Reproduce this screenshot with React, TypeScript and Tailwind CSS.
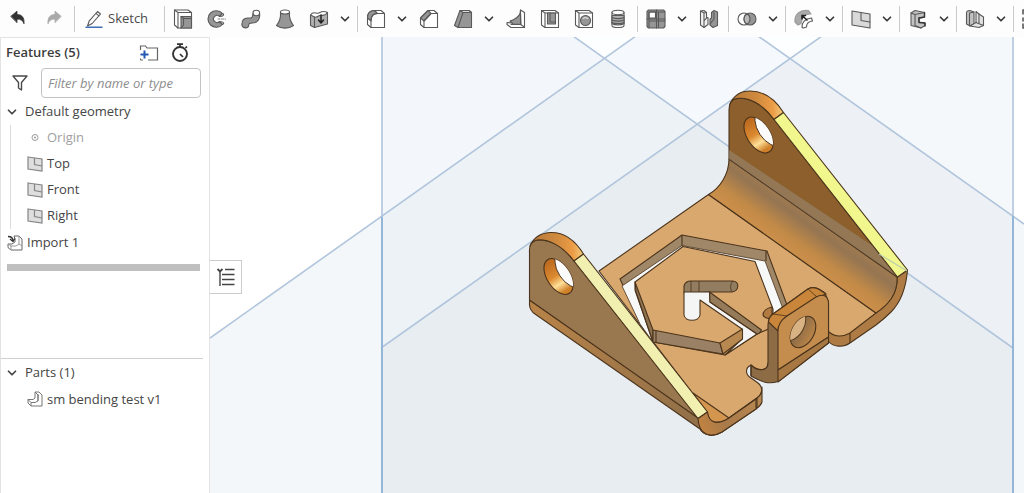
import { useState, type ReactNode } from 'react';
import { ChevronDown } from 'lucide-react';

const ink = '#595959';
const mid = '#969696';
const pale = '#d9d9d9';

function Icon({ children, size = 20 }: { children: ReactNode; size?: number }) {
  return (
    <svg width={size} height={size} viewBox="0 0 20 20" fill="none" stroke={ink} strokeWidth="1.100" strokeLinejoin="round" strokeLinecap="round" aria-hidden="true">
      {children}
    </svg>
  );
}

const icons = {
  undo: (
    <Icon>
      <path d="M3 7.2 9 2.2v3.300c4.800 0 7.600 3 7 9.300-1-3.200-3.200-4.800-7-4.700v3.200Z" fill="#333" stroke="#333" strokeWidth="0.800" />
    </Icon>
  ),
  redo: (
    <Icon>
      <path d="M17 7.2 11 2.200v3.300c-4.800 0-7.600 3-7 9.300 1-3.200 3.200-4.700 7-4.700v3.200Z" fill="#a9a9a9" stroke="#a9a9a9" strokeWidth="0.800" />
    </Icon>
  ),
  sketch: (
    <Icon>
      <path d="m3.500 17 1.800-5.200L13.500 2.500l3 2.500-8.300 9.500L3.500 17ZM12 4.300l3 2.500" />
      <path d="M2 18.300h16" stroke="#3f6fb5" strokeWidth="1.400" />
    </Icon>
  ),
  extrude: (
    <Icon>
      <path d="M1.500 1h13.500l3.500 2.500V19H5l-3.500-3Z" fill="#fff" />
      <path d="M1.500 1 5 3.500h13.500M5 3.500V19" />
      <path d="M8 7.500h10.500V19H8Z" fill={mid} />
      <path d="m8 19 2.500-3V9.500M10.500 9.500h8M8 7.500l2.500 2" />
    </Icon>
  ),
  revolve: (
    <Icon>
      <path d="M15.500 4.500A8.300 8.300 0 1 0 15.500 15.500L12.500 12.500a3.500 3.500 0 1 1 0-5Z" fill={mid} />
      <path d="M15.500 4.500c2 .5 1.500 3-3 3ZM15.500 15.500c2-.5 1.500-3-3-3Z" fill="#fff" />
      <path d="M11 10h7.500" stroke="#888" strokeDasharray="2 1.500" />
    </Icon>
  ),
  sweep: (
    <Icon>
      <path d="M1 16.500c-.5-5 2-8 6.500-7.500 4 .4 4-1 4.500-4.500l6.500-.5c1 6-2 10-7 10-3 0-4 0-4 3.500C6.500 19.500 2 19.500 1 16.500Z" fill={mid} />
      <ellipse cx="15.300" cy="4" rx="3.300" ry="2.700" fill="#fff" />
    </Icon>
  ),
  loft: (
    <Icon>
      <path d="M5.500 3c.5 6-1 10-4 13.500 5 3.500 12 3.500 17 0-3-3.500-4.500-7.500-4-13.500Z" fill={mid} />
      <ellipse cx="10" cy="3" rx="4.500" ry="2" fill="#fff" />
    </Icon>
  ),
  thicken: (
    <Icon>
      <path d="M1.500 6v10.500l4 2 13-3.500V3.500Z" fill="#b0b0b0" />
      <path d="M1.500 6c3-5 6 0 9.500-2.500 3-2 5-1 7.500 0-3 5-6.500 1.500-9 3.500-1.500 1-3 1.500-4 1Z" fill="#fff" />
      <path d="M5.500 8v10.500" />
      <path d="M12 6v8m-2.500-3 2.500 3 2.500-3" stroke="#222" strokeWidth="1.500" />
    </Icon>
  ),
  fillet: (
    <Icon>
      <path d="M1.500 9c0-5 2.500-7.500 7-7.500h6.500l3.500 3V18.500H5l-3.500-3Z" fill="#fff" />
      <path d="M1.500 9c0-5 2.500-7.500 7-7.500l3 3C7 4.500 5 7 5 12Z" fill={mid} />
      <path d="M5 18.500V12c0-5 2-7.500 6.500-7.500h7" />
    </Icon>
  ),
  chamfer: (
    <Icon>
      <path d="M1.500 9 9 1.500h6l3.500 3V18.500H5l-3.500-3Z" fill="#fff" />
      <path d="M1.500 9 9 1.500l3 3L5 12Z" fill={mid} />
      <path d="M5 18.500V12l7-7.500h6.500" />
    </Icon>
  ),
  draft: (
    <Icon>
      <path d="M7 1.500h9l2.500 2V18.500H5l-3.500-2Z" fill={mid} />
      <path d="M7 1.500h9l2.500 2H10Z" fill={pale} />
      <path d="M10 3.500 5 18.500" />
    </Icon>
  ),
  rib: (
    <Icon>
      <path d="M14.500 1 18.500 3.500V18.500H5L1 15.500v-2l6 .5 7-8Z" fill="#fff" />
      <path d="M14.500 4C12 9 9 10.500 4 12l3 3 8 .5Z" fill={mid} />
      <path d="M14.500 1v14.500L18.500 18M14.500 15.500H5" />
    </Icon>
  ),
  shell: (
    <Icon>
      <path d="M1.500 1.500H15l3.500 2.500v14.500H5L1.500 16Z" fill="#fff" />
      <path d="M1.500 1.500 5 4h13.500M5 4v14.500" />
      <path d="M7.500 4h8v11h-8Z" fill={mid} />
      <path d="M10 4v9h5.500" />
    </Icon>
  ),
  hole: (
    <Icon>
      <path d="M1.500 1.500H15L18.500 4v14.500H5L1.500 16Z" fill="#fff" />
      <path d="M1.500 1.500 5 4h13.500M5 4v14.500" />
      <circle cx="11.500" cy="11.500" r="5" fill={mid} />
      <path d="M9 9.500c1.500-1 3.500-1 5 0" stroke="#ddd" />
    </Icon>
  ),
  thread: (
    <Icon>
      <path d="M4 3.500v13c0 2.700 12 2.700 12 0v-13Z" fill="#fff" />
      <path d="M4 6.500v8c2.500 2 9.500 2 12 0v-8Z" fill="#b0b0b0" />
      <ellipse cx="10" cy="3.500" rx="6" ry="2.200" fill="#fff" />
      <path d="M4 8.500c3 1.500 9 1.500 12 0M4 11c3 1.500 9 1.500 12 0M4 13.500c3 1.500 9 1.500 12 0" />
    </Icon>
  ),
  pattern: (
    <Icon>
      <path d="M1 2.500 2.500 1h15L19 2.500v15L17.500 19h-15L1 17.500Z" fill={mid} />
      <path d="M3 3h6.500v6H3Z" fill="#fff" />
      <path d="M10.500 1v18M1 10h18M3 3h15.500M3 3v15.500M12.500 3v15.500M3 12h16" />
    </Icon>
  ),
  mirror: (
    <Icon>
      <path d="M1.500 2 5 1.500l2.500 2V9L9 8.500v7L5 18.500l-3.500-2.500Z" fill="#f1f1f1" />
      <path d="M1.500 2 5 4v14.500M5 4l2.500-.5M5 12l2.500-3" />
      <path d="m18.500 3-3.500-1.500-2.500 2V9L11 10v6l3 2.500 4.500-2Z" fill={mid} />
      <path d="M15 3.500V10l-4 5" />
    </Icon>
  ),
  boolean: (
    <Icon>
      <circle cx="7" cy="10" r="6" fill="#fff" />
      <circle cx="13" cy="10" r="6" fill={mid} />
      <path d="M10 4.800a6 6 0 0 1 0 10.400 6 6 0 0 1 0-10.400Z" fill="#b9b9b9" />
    </Icon>
  ),
  moveFace: (
    <Icon>
      <path d="M1 13C0 5 7 0 14.500 1.500L17 5C11 4.500 7.500 8 7 14.500L4 16Z" fill="#aaa" stroke="#999" />
      <path d="M8 18.500c-.5-5 3-9 9.500-9.500l1 3c-4 .5-6 3-6 6l-3 1Z" fill="#fff" />
      <path d="m13 11-5-4.500m0 3.500V6.500h3.500" stroke="#222" strokeWidth="1.600" />
    </Icon>
  ),
  plane: (
    <Icon>
      <path d="m1 2 18 3v14L1 16Z" fill={pale} />
      <path d="M10 3.500v8l9 1.500" />
    </Icon>
  ),
  sheetMetal: (
    <Icon>
      <path d="M3 4 7 1.500l9.500 2V8L13 9l-2-.5v4.500l6 1v2.500L13 19l-10-2.500Z" fill="#c2c2c2" />
      <path d="m3 4 4 1.500 9.500-2M7 5.500v11L13 19" />
      <path d="M16.500 3.500V8L11 9v4.500l6 .5v3" stroke="#333" strokeWidth="1.400" />
    </Icon>
  ),
  flange: (
    <Icon>
      <path d="M1.500 4C1.500 2 3 1.500 5 1.500L9 3v12l-4 2-3.500-2Z" fill="#c2c2c2" />
      <path d="M11 2.500v11l-6 3.500 9 1.500 4.500-2V8L14 5Z" fill="#e2e2e2" />
      <path d="M4.500 4v12M9 3 4.500 4M11 13.500l7.500 3M14 5v9" />
    </Icon>
  ),
  frame: (
    <Icon>
      <path d="M5 1H1v4M1 9v3M1 15v4h4M9 1h3M9 19h3" strokeWidth="1.600" />
    </Icon>
  ),
};

type Tool = { name: string; icon: ReactNode; menu?: boolean };

const toolGroups: Tool[][] = [
  [
    { name: 'Extrude', icon: icons.extrude },
    { name: 'Revolve', icon: icons.revolve },
    { name: 'Sweep', icon: icons.sweep },
    { name: 'Loft', icon: icons.loft },
    { name: 'Thicken', icon: icons.thicken, menu: true },
  ],
  [
    { name: 'Fillet', icon: icons.fillet, menu: true },
    { name: 'Chamfer', icon: icons.chamfer },
    { name: 'Draft', icon: icons.draft, menu: true },
    { name: 'Rib', icon: icons.rib },
    { name: 'Shell', icon: icons.shell },
    { name: 'Hole', icon: icons.hole },
    { name: 'External thread', icon: icons.thread },
  ],
  [
    { name: 'Linear pattern', icon: icons.pattern, menu: true },
    { name: 'Mirror', icon: icons.mirror },
  ],
  [{ name: 'Boolean', icon: icons.boolean, menu: true }],
  [{ name: 'Move face', icon: icons.moveFace, menu: true }],
  [{ name: 'Plane', icon: icons.plane, menu: true }],
  [{ name: 'Sheet metal', icon: icons.sheetMetal, menu: true }],
  [{ name: 'Flange', icon: icons.flange, menu: true }],
  [{ name: 'Frame', icon: icons.frame }],
];

function Separator() {
  return <div className="ml-0.5 mr-px h-[26px] w-px shrink-0 bg-[#c9c9c9]" />;
}

function Toolbar() {
  return (
    <header className="flex h-[37px] shrink-0 items-center overflow-hidden bg-[#fdfdfd]">
      <button aria-label="Undo" className="flex w-9 shrink-0 justify-center">{icons.undo}</button>
      <button aria-label="Redo" className="flex w-9 shrink-0 justify-center">{icons.redo}</button>
      <Separator />
      <button className="flex w-[86px] shrink-0 items-center gap-1 pl-2 text-[13px] text-[#4a4a4a]">
        {icons.sketch}
        Sketch
      </button>
      {toolGroups.map((group) => (
        <div key={group[0].name} className="flex shrink-0 items-center">
          <Separator />
          {group.map((tool) => (
            <div key={tool.name} className="flex items-center">
              <button aria-label={tool.name} className="flex w-[34px] justify-center">{tool.icon}</button>
              {tool.menu && (
                <button aria-label={`${tool.name} menu`} className="flex w-[19px] pl-0.5 text-[#3a3a3a]">
                  <ChevronDown size={14} strokeWidth={3} />
                </button>
              )}
            </div>
          ))}
        </div>
      ))}
    </header>
  );
}

function PlaneIcon() {
  return (
    <svg width="16" height="16" viewBox="0 0 16 16" fill="#dedede" stroke="#858585" strokeWidth="1.200" aria-hidden="true">
      <path d="m1 1 14 2v12L1 13Z" />
      <path d="M7.500 2v6.500l7.500 1.500" fill="none" />
    </svg>
  );
}

function OriginIcon() {
  return (
    <svg width="16" height="16" viewBox="0 0 16 16" fill="none" stroke="#9a9a9a" aria-hidden="true">
      <circle cx="8" cy="7.500" r="3" />
      <circle cx="8" cy="7.500" r="1" fill="#9a9a9a" stroke="none" />
    </svg>
  );
}

function ImportIcon() {
  return (
    <svg width="16" height="16" viewBox="0 0 16 16" fill="none" stroke="#666" strokeLinejoin="round" aria-hidden="true">
      <path d="M7 1h5l3 3v11H4l-3-2.500V9h4l3-2V4Z" fill="#fff" />
      <path d="M12 1v8l-3 2H4v4M4 11 1 9M12 9l3 2" stroke="#999" />
      <path d="M1 1.500c3 0 5 1.500 5 4.500M3 4l3 2.500L8 3.500" stroke="#333" strokeWidth="1.300" />
    </svg>
  );
}

function PartIcon() {
  return (
    <svg width="16" height="16" viewBox="0 0 16 16" fill="none" stroke="#777" strokeLinejoin="round" aria-hidden="true">
      <path d="M8 1h4l3 3v11H4l-3-3V8.500h5l2-1.500Z" fill="#fff" />
      <path d="m8 1 3 3v6l-3 1.500H4V15M4 11.500l-3-3M11 4h1M11 10V4" />
    </svg>
  );
}

const planes = ['Top', 'Front', 'Right'];

function Sidebar() {
  const [filter, setFilter] = useState('');

  return (
    <aside className="flex w-[210px] shrink-0 flex-col border-x border-t border-[#e3e3e3] bg-white pt-px text-[13px] text-[#454545]">
      <section className="flex flex-[320_1_0] flex-col">
        <div className="flex h-7 items-center pl-[5px] pr-5">
          <h2 className="flex-1 font-semibold text-[#3c3c3c]">Features (5)</h2>
          <button aria-label="Add folder" className="mr-3">
            <svg width="20" height="16" viewBox="0 0 20 16" fill="none" aria-hidden="true">
              <path d="M1.500 5V1h5l1.500 2h10.500v12H9" stroke="#666" strokeWidth="1.200" />
              <path d="M5.500 5.500v8M1.500 9.500h8" stroke="#2459b3" strokeWidth="2" />
              <path d="M1.500 13.500V15H4" stroke="#666" />
            </svg>
          </button>
          <button aria-label="Regeneration times">
            <svg width="18" height="20" viewBox="0 0 18 20" fill="none" stroke="#333" aria-hidden="true">
              <circle cx="9" cy="11" r="7" strokeWidth="1.900" />
              <path d="M9 4V1.500M6 1.200h6M14.500 5l1.500-1.500M9 11l3 3" strokeWidth="1.700" />
            </svg>
          </button>
        </div>

        <div className="flex h-8 items-center pl-2.5 pr-2">
          <svg width="18" height="18" viewBox="0 0 18 18" fill="none" stroke="#4a4a4a" strokeWidth="1.400" strokeLinejoin="round" className="mr-3 shrink-0" aria-hidden="true">
            <path d="M2 2h14l-5.500 6.500V16L7.500 14V8.500Z" />
          </svg>
          <input
            type="text"
            aria-label="Filter by name or type"
            placeholder="Filter by name or type"
            value={filter}
            onChange={(e) => setFilter(e.target.value)}
            className="h-[30px] w-full min-w-0 rounded border border-[#c3c3c3] px-1.5 italic outline-none placeholder:text-[#8d8d8d]"
          />
        </div>

        <button className="flex h-[26px] items-center gap-1.5 pl-1">
          <ChevronDown size={14} strokeWidth={3} />
          Default geometry
        </button>
        <ul className="ml-[9px] border-l border-[#dcdcdc] pl-4">
          <li className="flex h-[26px] items-center gap-1 text-[#a0a0a0]">
            <OriginIcon />
            Origin
          </li>
          {planes.map((name) => (
            <li key={name} className="flex h-[26px] items-center gap-1">
              <PlaneIcon />
              {name}
            </li>
          ))}
        </ul>
        <div className="flex h-[27px] items-center gap-1 pl-1.5">
          <ImportIcon />
          Import 1
        </div>
        <div className="ml-1.5 mr-[9px] mt-2 h-[7px] bg-[#bfbfbf]" />
      </section>

      <section className="mr-1.5 flex flex-[134_1_0] flex-col border-t border-[#cfcfcf]">
        <button className="flex h-[27px] items-center gap-1.5 pl-1">
          <ChevronDown size={14} strokeWidth={3} />
          Parts (1)
        </button>
        <div className="flex h-[26px] items-center gap-1 pl-[26px]">
          <PartIcon />
          sm bending test v1
        </div>
      </section>
    </aside>
  );
}

function Planes() {
  return (
    <g>
      <path d="M210 338 381 217V493H210Z" fill="#f3f7fa" />
      <path d="M381 37H573L604.500 58.500 381 217Z" fill="#f3f7fb" />
      <path d="M573 37h63l-31.500 21.500ZM758 37h63l-31.500 21.500Z" fill="#fdfeff" />
      <path d="M636 37H758L789.500 58.500 697.500 124 604.500 58.500Z" fill="#f5f9fd" />
      <path d="M821 37H1013V216L789.500 58.500Z" fill="#f4f8fb" />
      <path d="M604.500 58.500 697.500 124 381 348V217Z" fill="#edf2f6" />
      <path d="M789.500 58.500 1013 216V348L697.500 124Z" fill="#edf1f6" />
      <path d="M697.500 124 1013 348V493H381V348Z" fill="#e8edf1" />
      <path d="M1013 216 1024 224V493H1013Z" fill="#f3f7fa" />
      <g stroke="#b1c5dc" strokeWidth="1.600" fill="none">
        <path d="M210 338 636 36M381 348 822 36M573 36 1013 348M758 36 1024 224" />
        <path d="M382 37V217M1013 37V216" />
      </g>
      <path d="M382 217V493M1013 216V493" stroke="#94b7d9" strokeWidth="2" />
    </g>
  );
}

function Bracket() {
  return (
    <g fill="none" stroke="#4b341c" strokeWidth="1.100" strokeLinejoin="round">
      {/* right wall edge and base thickness */}
      <path d="M907.500 270C906 288 901 302 891 312 884 319 880 322 876 325L850 343C843 348 833 347 828 341V331L876 312C890 303 898 292 897 277Z" fill="#ad7b43" />
      <path d="M850 333V343" />
      {/* base plate */}
      <path d="M708.500 194.500 876 313 850 333C843 337 835 337 829 332L768 363C768 372 757 371 751 365 745 368 745 374 751 378L758 383C763 387 763 394 757 398L729 418C718 425 709 424 707 412L599 271Z" fill="#d9a86e" />
      <path d="M757 398C762 394 762 391 762 387V402C761 405 759 407 756 409L722 432C714 437 705 436 701 430L698 418 707 412C709 424 718 425 729 418Z" fill="url(#edge)" />
      <path d="M757 398V408" />
      <path d="M693 393 729 418C718 425 709 424 707 412Z" fill="#d4954f" />

      {/* right bend */}
      <path d="M729 159 897 277C898 292 890 304 876 313L708.500 194.500C720 188 729 174 729 159Z" fill="url(#bend)" />
      {/* right wall */}
      <path d="M729 159V110C729 102 732 99 737 98.500 748 97 762 103 774 119.500L897.500 277Z" fill="#8c5f2c" />
      <path d="M729 150 873 246 897.500 277 729 159Z" fill="#9c917f" fillOpacity="0.500" stroke="none" />
      <path d="M730 104C734 95 741 91 750 91 763 91 775 99 783.500 112.500L774 119.500C762 103 748 97 737 98.500 733 99 731 101 730 104Z" fill="url(#tip)" />
      <path d="M774 119.500 783.500 112.500 907.500 270 897.500 277Z" fill="#f2f78d" />
      <path d="m879 254 28 17" stroke="#b9cbb0" />

      {/* hex slot */}
      <path d="M620 279 682 235 767 251 787 305 772 317 765 300 650 343Z" fill="#9f8768" />
      <path d="M622 286 682 245.500 765 261 783 309 773 317 760 285 680 255 653 342 640 324Z" fill="#f7f8f8" strokeWidth="0.800" />
      <path d="M682 235V246M766 251V261" />
      <path d="M683 246.500 755 261.500 773 309V327L757 334 725 355 653 342 635 290V282Z" fill="#d9a86e" />
      <path d="M772 316V307C767 308 763 311 763 315 764 318 768 319 772 318" fill="#b07a40" />
      <path d="M635 282 653 330V342L636 292Z" fill="#8f7350" />
      <path d="M684 293V286C685 282 687 281 691 281H733C740 282 739 291 732 292H710Z" fill="#927d60" />
      <path d="M691 281V292M699 281V292M733 281C730 284 730 289 732 292" strokeWidth="0.800" />
      <path d="M684 292H709.500L710 302 757 334 725 355 742 339V329L700 300V315C699 322 685 322 684 315Z" fill="#f5f5f6" />
      <path d="M709.500 292 761.500 330C760 333 758 334 757 334L710 302Z" fill="#957b59" />
      <path d="M653 330 720 343 723 354 653 342Z" fill="#9a8165" />
      <path d="M656 331V342" />
      <path d="M720 343 742.500 329V339L723 354Z" fill="#b78850" />

      {/* left wall */}
      <path d="M529.500 300V305C530 310 532 312 535 314L700 429C703 435 714 437 722 432 710 432 705 424 698 417Z" fill="url(#lower)" />
      <path d="M529.500 300V252C529 244 532 241 537 240 548 239 562 245 574 261L698 418Z" fill="#99774f" />
      <path d="M530 246C534 237 541 233 550 232.500 563 232 575 240 583.500 254L574 261C562 245 548 239 537 240 533 241 531 243 530 246Z" fill="url(#tip)" />
      <path d="M574 261 583.500 254 707.500 412 698 418.500Z" fill="#f2f0b0" />
      <path d="M698 418.500 707.500 412C709 424 718 425 729 418L756 399V409L722 432C711 438 699 436 698 418.500Z" fill="url(#edge)" />

      {/* wall holes */}
      {[[558.500, 276.500], [758.500, 135]].map(([x, y]) => (
        <g key={x} transform={`translate(${x} ${y})`}>
          <ellipse rx="11.500" ry="20" transform="rotate(-33)" fill="url(#bore)" />
          <g clipPath="url(#boreClip)">
            <ellipse cx="11" cy="-7" rx="11.500" ry="20" transform="rotate(-33 11 -7)" fill="#fbfbfb" strokeWidth="0.900" />
          </g>
        </g>
      ))}

      {/* front tab */}
      <path d="M768 363V325C768 320 769 317 773 314L808 289C814 286 818 288 825 293L828.500 302V343L778 381.500C768 385 760 381 751 376V365C758 372 768 371 768 363Z" fill="#8d6b45" />
      <path d="M768.500 322C769 318 770 316 773 314L808 289C814 286 818 288 826 294L816.500 298 787 316C781 321 778 325 778 331Z" fill="#c98539" />
      <path d="M778 370V331C778 324 781 320 787 316L816 297C823 293 828 296 828.500 303V337Z" fill="#c48d4e" />
      <path d="M778 370 828.500 337V343L778 382Z" fill="#a87843" />
      <path d="M808 289 817 297M773 314 787 316" strokeWidth="0.800" />
      <path d="M751 365V376" />
      <g transform="translate(803 332)">
        <ellipse rx="11" ry="17" transform="rotate(30)" fill="url(#tabBore)" />
        <g clipPath="url(#tabClip)">
          <ellipse cx="-10" cy="-7" rx="11" ry="17" transform="rotate(30 -10 -7)" fill="#d9b283" strokeWidth="0.900" />
        </g>
      </g>
    </g>
  );
}

function Viewport() {
  return (
    <main className="relative min-w-0 flex-1 overflow-hidden bg-white">
      <svg className="absolute inset-0 size-full" viewBox="210 37 814 456" preserveAspectRatio="xMidYMid slice" role="img" aria-label="Bent sheet metal bracket">
        <defs>
          <linearGradient id="bend" gradientUnits="userSpaceOnUse" x1="775" y1="250" x2="808" y2="204">
            <stop offset="0" stopColor="#d0924c" />
            <stop offset="0.350" stopColor="#c28a47" />
            <stop offset="0.700" stopColor="#957552" />
            <stop offset="1" stopColor="#a87f4f" />
          </linearGradient>
          <linearGradient id="tip">
            <stop offset="0" stopColor="#b47a3b" />
            <stop offset="0.500" stopColor="#d08a3e" />
            <stop offset="0.800" stopColor="#ec9c45" />
            <stop offset="1" stopColor="#f2cd7e" />
          </linearGradient>
          <linearGradient id="bore" gradientUnits="userSpaceOnUse" x1="0" y1="-20" x2="0" y2="20">
            <stop offset="0" stopColor="#b8671e" />
            <stop offset="0.450" stopColor="#dc8a30" />
            <stop offset="0.680" stopColor="#ffdf98" />
            <stop offset="0.900" stopColor="#cf8029" />
          </linearGradient>
          <linearGradient id="tabBore">
            <stop offset="0.200" stopColor="#8a6a46" />
            <stop offset="1" stopColor="#b98448" />
          </linearGradient>
          <linearGradient id="lower" gradientUnits="userSpaceOnUse" x1="530" y1="305" x2="710" y2="430">
            <stop offset="0" stopColor="#b88348" />
            <stop offset="1" stopColor="#8e6e49" />
          </linearGradient>
          <linearGradient id="edge" gradientUnits="userSpaceOnUse" x1="698" y1="425" x2="762" y2="395">
            <stop offset="0" stopColor="#c28342" />
            <stop offset="0.350" stopColor="#a97a49" />
            <stop offset="1" stopColor="#b98a54" />
          </linearGradient>
          <clipPath id="boreClip">
            <ellipse rx="11.500" ry="20" transform="rotate(-33)" />
          </clipPath>
          <clipPath id="tabClip">
            <ellipse rx="11" ry="17" transform="rotate(30)" />
          </clipPath>
        </defs>
        <Planes />
        <Bracket />
      </svg>
      <button aria-label="Show feature details" className="absolute left-0 top-[223px] flex h-[34px] w-8 items-center justify-center border border-l-0 border-[#cccccc] bg-white">
        <svg width="20" height="20" viewBox="0 0 20 20" fill="none" stroke="#444" strokeWidth="1.400" aria-hidden="true">
          <path d="M9 2.500h9.500M6 7.500h12.500M6 12.500h12.500M6 17.500h12.500M4 4.500V19" />
          <path d="m1.500 2 2.500 2.500L6.500 2" strokeWidth="1.800" />
        </svg>
      </button>
    </main>
  );
}

export default function App() {
  return (
    <div className="flex h-screen flex-col overflow-hidden bg-white font-['Open_Sans','Liberation_Sans',sans-serif]">
      <Toolbar />
      <div className="flex min-h-0 flex-1">
        <Sidebar />
        <Viewport />
      </div>
    </div>
  );
}
